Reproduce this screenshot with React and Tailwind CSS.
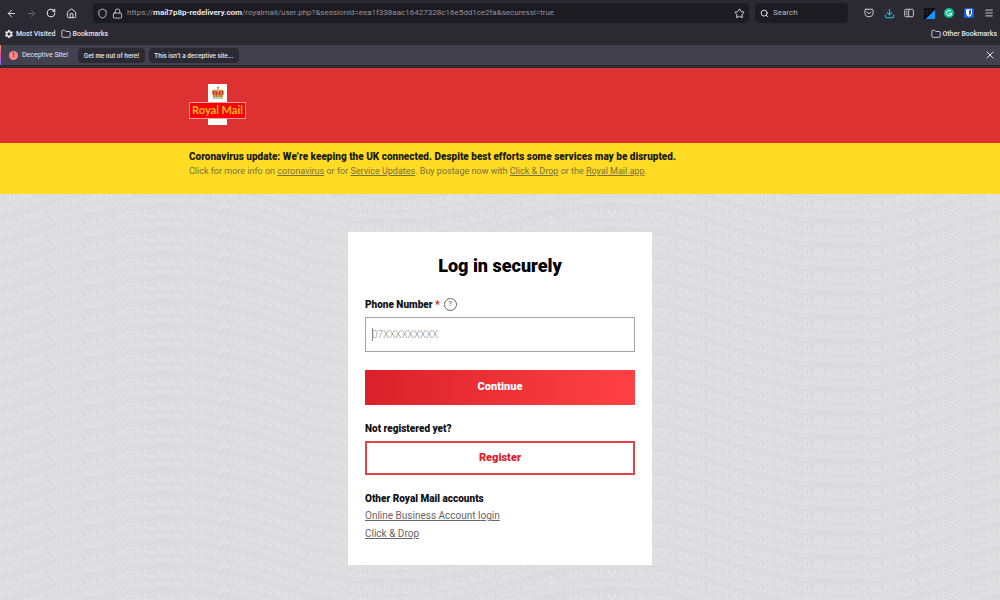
import React from "react";
import {
  ArrowLeft,
  ArrowRight,
  RotateCw,
  House,
  Shield,
  Lock,
  Star,
  Search,
  Folder,
  Download,
  Menu,
  X,
} from "lucide-react";
import { MdSettings } from "react-icons/md";

const iconButton = "flex h-5 w-5 items-center justify-center";

function PocketIcon() {
  return (
    <svg viewBox="0 0 16 16" className="size-[10px]" fill="none" stroke="#d0cfd6" strokeWidth="1.6" strokeLinecap="round" strokeLinejoin="round">
      <path d="M3 2h10a1.500 1.500 0 0 1 1.500 1.500V7.500a6.500 6.500 0 0 1-13 0V3.500A1.500 1.500 0 0 1 3 2z" />
      <path d="M4.800 6.300 8 9.300l3.200-3" />
    </svg>
  );
}

function SidebarIcon() {
  return (
    <svg viewBox="0 0 16 16" className="size-[10px]" fill="none" stroke="#d0cfd6" strokeWidth="1.500">
      <rect x="1" y="2" width="14" height="12" rx="2" />
      <path d="M7.500 2v12M3 5.300h2.500M3 8h2.500M3 10.700h2.500" />
    </svg>
  );
}

function TriangleIcon() {
  return (
    <svg viewBox="0 0 20 20" className="size-[11px]">
      <rect width="20" height="20" fill="#0b0b0f" />
      <path d="M20 3v17H3z" fill="#1495fa" />
      <path d="M6 0v12M12 0v7M0 6h12M0 12h7" stroke="#35343f" strokeWidth="1" />
    </svg>
  );
}

function GrammarIcon() {
  return (
    <svg viewBox="0 0 20 20" className="size-[10px]">
      <circle cx="10" cy="10" r="10" fill="#15c39a" />
      <path d="M13.800 6.500A5 5 0 1 0 15 11h-4M15 11v3.500" fill="none" stroke="#fff" strokeWidth="2" />
    </svg>
  );
}

function VaultIcon() {
  return (
    <svg viewBox="0 0 20 20" className="size-[10px]">
      <rect width="20" height="20" rx="3" fill="#175ddc" />
      <path d="M4 2.500h12V10c0 4-3 6.300-6 8-3-1.700-6-4-6-8z" fill="#fff" />
      <path d="M10 4.700h4V10c0 2.500-1.800 4-4 5.300z" fill="#175ddc" />
    </svg>
  );
}

function Crown() {
  return (
    <svg viewBox="0 0 28 28" className="h-[14px] w-[14px]">
      <path d="M5 20C0 13 2 8 7 8c3 0 5 1 7 3 2-2 4-3 7-3 5 0 7 5 2 12z" fill="#c9342c" />
      <path d="M5 20C0 13 2 8 7 8c3 0 5 1 7 3 2-2 4-3 7-3 5 0 7 5 2 12M14 10v10M9 20C7 16 7 12 9 9M19 20c2-4 2-8 0-11" fill="none" stroke="#dfbd6c" strokeWidth="1.800" />
      <path d="M14 1v7M11.500 3.500h5" stroke="#b98b2c" strokeWidth="2" />
      <circle cx="14" cy="8" r="2" fill="#d9a93b" />
      <rect x="4" y="19" width="20" height="4" fill="#d9a93b" />
      <path d="M5 21h18" stroke="#3f7a55" strokeWidth="1.500" strokeDasharray="2 3" />
      <path d="M4 24.500h20" stroke="#a5a5a5" strokeWidth="2" />
    </svg>
  );
}

function Logo() {
  return (
    <a href="#home" aria-label="Royal Mail" className="relative flex h-[41px] w-[57px] justify-center">
      <span className="flex h-full w-[19px] justify-center bg-white pt-[2px]">
        <Crown />
      </span>
      <span className="absolute inset-x-0 top-[18px] flex h-[17px] items-center justify-center border border-[#f5a0a0] bg-[#fb0006] pb-[2px] font-['Lato',sans-serif] text-[11px] font-bold leading-none text-[#fdb813]">
        Royal Mail
      </span>
    </a>
  );
}

const wave = "q 112.500 -40 225 0 t 225 0 t 225 0 t 225 0 t 225 0";
const rows = [-3, -2, -1, 0, 1, 2, 3];
const largeRun = "ROYALMAIL".repeat(20);
const smallRun = "ROYALMAIL".repeat(30);

function WaveBackdrop() {
  return (
    <svg aria-hidden="true" className="absolute inset-0 h-full w-full">
      <defs>
        <pattern id="waves" width="450" height="24" patternUnits="userSpaceOnUse" className="font-['Open_Sans',sans-serif] font-bold" fill="#e2e2e3">
          {rows.map((row) => (
            <g key={row}>
              <path id={`large${row}`} d={`M -397 ${row * 24 + 20} ${wave}`} fill="none" />
              <path id={`small${row}`} d={`M -397 ${row * 24 + 29} ${wave}`} fill="none" />
              <text fontSize="12">
                <textPath href={`#large${row}`} startOffset="32">{largeRun}</textPath>
              </text>
              <text fontSize="8">
                <textPath href={`#small${row}`} startOffset="36">{smallRun}</textPath>
              </text>
            </g>
          ))}
        </pattern>
      </defs>
      <rect width="100%" height="100%" fill="url(#waves)" />
    </svg>
  );
}

function BrowserChrome() {
  return (
    <div className="bg-[#2b2a33] font-['Roboto',sans-serif] text-[#e6e5ec]">
      <div className="flex items-center pt-[3px] pr-[1px]">
        <div className="flex pl-[1px]">
          <button aria-label="Back" className={iconButton}><ArrowLeft size={11} /></button>
          <button aria-label="Forward" className={`${iconButton} text-[#6b6a74]`}><ArrowRight size={11} /></button>
          <button aria-label="Reload" className={iconButton}><RotateCw size={10} strokeWidth={2.5} /></button>
          <button aria-label="Home" className={iconButton}><House size={11} /></button>
        </div>
        <div className="ml-3 flex h-5 min-w-0 flex-1 items-center rounded-sm bg-[#1c1b22] pr-1 text-[8px]">
          <span className="ml-[2px] flex w-[14px] justify-center text-[#c9c8d0]"><Shield size={11} /></span>
          <span className="ml-[2px] flex w-[12px] justify-center text-[#c9c8d0]"><Lock size={11} /></span>
          <span className="ml-1 min-w-0 flex-1 truncate text-[#94939c]">
            https://<b className="font-semibold text-[#f2f1f7]">mail7p8p-redelivery.com</b>
            /royalmail/user.php?&amp;sessionid=eea1f338aac16427328c16e5dd1ce2fa&amp;securessl=true
          </span>
          <button aria-label="Bookmark this page" className="flex w-[11px] justify-center"><Star size={11} /></button>
        </div>
        <label className="ml-[6px] flex h-5 w-[93px] items-center gap-1 rounded-sm bg-[#1c1b22] pl-[5px]">
          <Search size={9} className="shrink-0" strokeWidth={2.5} />
          <input aria-label="Search" placeholder="Search" className="w-full bg-transparent text-[8px] outline-none placeholder:text-[#b9b8c0]" />
        </label>
        <div className="ml-[11px] flex">
          <button aria-label="Pocket" className={iconButton}><PocketIcon /></button>
          <button aria-label="Downloads" className={`${iconButton} text-[#18b7d0]`}><Download size={11} strokeWidth={2.5} /></button>
          <button aria-label="Sidebar" className={iconButton}><SidebarIcon /></button>
          <button aria-label="Page tools" className={iconButton}><TriangleIcon /></button>
          <button aria-label="Writing assistant" className={iconButton}><GrammarIcon /></button>
          <button aria-label="Password manager" className={iconButton}><VaultIcon /></button>
          <button aria-label="Menu" className={iconButton}><Menu size={10} /></button>
        </div>
      </div>
      <div className="flex h-[22px] items-center pl-1 pr-[3px] text-[7px] font-medium">
        <button className="flex items-center gap-[2px]"><MdSettings size={10} />Most Visited</button>
        <button className="ml-[6px] flex items-center gap-[1px]"><Folder size={10} />Bookmarks</button>
        <button className="ml-auto flex items-center gap-[1px]"><Folder size={10} />Other Bookmarks</button>
      </div>
      <div role="alert" className="flex h-5 items-center bg-[#42414d] pr-1 text-[7px]">
        <span className="h-full w-[1px] bg-linear-to-b from-[#ff9640] via-[#e7489a] to-[#7b5cff]" />
        <span className="ml-2 flex size-[9px] items-center justify-center rounded-full bg-[#ff848b] font-bold leading-none text-[#6d3039]">!</span>
        <span className="ml-1 w-[56px]">Deceptive Site!</span>
        <button className="h-[15px] w-[67px] rounded-sm bg-[#2b2a33] font-['Inter',sans-serif] text-[6px] font-semibold">Get me out of here!</button>
        <button className="ml-1 h-[15px] w-[90px] rounded-sm bg-[#2b2a33] font-['Inter',sans-serif] text-[6px] font-semibold">This isn’t a deceptive site...</button>
        <button aria-label="Dismiss" className="ml-auto"><X size={12} /></button>
      </div>
      <div className="h-[3px]" />
    </div>
  );
}

export default function App() {
  return (
    <div className="flex min-h-screen flex-col font-['Roboto',sans-serif]">
      <BrowserChrome />
      <header className="bg-[#de3232]">
        <div className="mx-auto flex h-[75px] max-w-[622px] items-center pb-[2px]">
          <Logo />
        </div>
      </header>
      <section className="bg-[#ffdb24]">
        <div className="mx-auto h-[51px] max-w-[622px] pt-[7px]">
          <h2 className="text-[10px] font-black leading-[14px] text-[#1d1c12]">
            Coronavirus update: We’re keeping the UK connected. Despite best efforts some services may be disrupted.
          </h2>
          <p className="text-[9px] leading-[14px] text-[#77713f]">
            Click for more info on <a href="#coronavirus" className="underline">coronavirus</a> or for{" "}
            <a href="#updates" className="underline">Service Updates</a>. Buy postage now with{" "}
            <a href="#drop" className="underline">Click &amp; Drop</a> or the{" "}
            <a href="#app" className="underline">Royal Mail app</a>.
          </p>
        </div>
      </section>
      <main className="relative flex flex-1 justify-center overflow-hidden bg-[#dcdcde] pt-[38px] pb-[35px]">
        <WaveBackdrop />
        <div className="relative flex w-[304px] flex-col bg-white px-[17px] pt-[22px] pb-[22px] text-[#111]">
          <h1 className="text-center text-[18px] font-black leading-6 text-black">Log in securely</h1>
          <div className="mt-4 flex h-5 items-center text-[10px] font-black">
            <label htmlFor="phone">Phone Number <span className="text-[#da202a]">*</span></label>
            <button aria-label="Help" className="ml-1 size-[13px] rounded-full border border-[#666] text-[8px] font-normal leading-none text-[#555]">?</button>
          </div>
          <div className="relative mt-[3px] flex">
            <input id="phone" placeholder="07XXXXXXXXX" className="h-[35px] w-full border border-[#a3a3a3] px-[6px] text-[10px] font-light outline-none placeholder:text-[#8f8f8f]" />
            <span className="absolute left-[7px] top-[11px] h-[13px] w-px bg-[#888]" />
          </div>
          <button type="button" className="mt-[18px] h-[35px] bg-linear-to-r from-[#da202a] to-[#ff4144] text-[11px] font-black text-white">Continue</button>
          <h2 className="mt-4 text-[10px] font-black leading-4">Not registered yet?</h2>
          <button type="button" className="mt-1 h-[34px] border-2 border-[#e5414a] text-[11px] font-black text-[#da202a]">Register</button>
          <h2 className="mt-4 text-[10px] font-black leading-4">Other Royal Mail accounts</h2>
          <a href="#business" className="self-start text-[10px] leading-[18px] text-[#666] underline">Online Business Account login</a>
          <a href="#drop" className="self-start text-[10px] leading-[18px] text-[#666] underline">Click &amp; Drop</a>
        </div>
      </main>
    </div>
  );
}
